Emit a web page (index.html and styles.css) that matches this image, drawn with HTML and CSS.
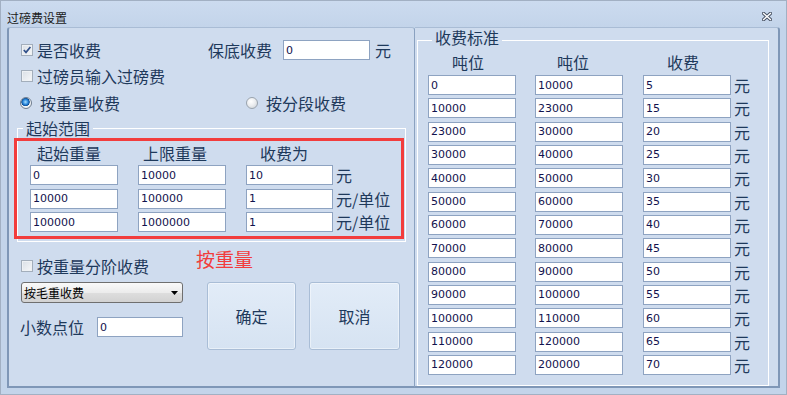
FILE: index.html
```html
<!DOCTYPE html>
<html lang="zh-CN">
<head>
<meta charset="utf-8">
<title>过磅费设置</title>
<link rel="stylesheet" href="styles.css">
</head>
<body>
<div class="window">
  <div class="titlebar">
    <span class="title">过磅费设置</span>
    <svg class="close" width="10" height="9" viewBox="0 0 10 9">
      <path d="M1.6 1.4 L8.4 7.6 M8.4 1.4 L1.6 7.6" stroke="#4b5567" stroke-width="3.4" stroke-linecap="square" fill="none"/>
      <path d="M1.6 1.4 L8.4 7.6 M8.4 1.4 L1.6 7.6" stroke="#ffffff" stroke-width="1.4" stroke-linecap="square" fill="none"/>
    </svg>
  </div>
  <div class="client">
    <div class="panel left">
      <div class="row r1">
        <div class="chk w-first"><span class="box"><svg width="10" height="10" viewBox="0 0 10 10"><path d="M1.8 5 L4 7.4 L8.4 2" stroke="#30508a" stroke-width="1.7" fill="none"/></svg></span><span>是否收费</span></div>
        <span class="lbl">保底收费</span>
        <input class="tb tb-min" value="0" readonly>
        <span class="unit u-min">元</span>
      </div>
      <div class="row r2">
        <div class="chk"><span class="box"></span><span>过磅员输入过磅费</span></div>
      </div>
      <div class="row r3">
        <div class="rad w-rad"><span class="radio on"></span><span>按重量收费</span></div>
        <div class="rad"><span class="radio"></span><span>按分段收费</span></div>
      </div>
      <fieldset class="grp range">
        <legend>起始范围</legend>
        <div class="redbox">
          <div class="rb-head">
            <span class="h1">起始重量</span>
            <span class="h2">上限重量</span>
            <span class="h3">收费为</span>
          </div>
          <div class="rb-row first">
            <input class="tb c1" value="0" readonly>
            <input class="tb c2" value="10000" readonly>
            <input class="tb c3" value="10" readonly>
            <span class="unit">元</span>
          </div>
          <div class="rb-row">
            <input class="tb c1" value="10000" readonly>
            <input class="tb c2" value="100000" readonly>
            <input class="tb c3" value="1" readonly>
            <span class="unit">元/单位</span>
          </div>
          <div class="rb-row">
            <input class="tb c1" value="100000" readonly>
            <input class="tb c2" value="1000000" readonly>
            <input class="tb c3" value="1" readonly>
            <span class="unit">元/单位</span>
          </div>
        </div>
      </fieldset>
      <div class="bottom">
        <div class="bcol">
          <div class="row">
            <div class="chk"><span class="box"></span><span>按重量分阶收费</span></div>
          </div>
          <div class="select">
            <span>按毛重收费</span>
            <svg width="7" height="4" viewBox="0 0 7 4"><path d="M0 0 H7 L3.5 4 Z" fill="#000"/></svg>
          </div>
          <div class="row dec">
            <span class="lbl">小数点位</span>
            <input class="tb tb-dec" value="0" readonly>
          </div>
        </div>
        <div class="acol">
          <div class="redlabel">按重量</div>
          <div class="btns">
            <button class="btn ok">确定</button>
            <button class="btn cancel">取消</button>
          </div>
        </div>
      </div>
    </div>
    <div class="panel right">
      <fieldset class="grp std">
        <legend>收费标准</legend>
        <div class="std-head">
          <span class="s1">吨位</span>
          <span class="s2">吨位</span>
          <span class="s3">收费</span>
        </div>
        <div class="std-rows">
          <div class="srow"><input class="tb" value="0" readonly><input class="tb" value="10000" readonly><input class="tb" value="5" readonly><span class="unit">元</span></div>
          <div class="srow"><input class="tb" value="10000" readonly><input class="tb" value="23000" readonly><input class="tb" value="15" readonly><span class="unit">元</span></div>
          <div class="srow"><input class="tb" value="23000" readonly><input class="tb" value="30000" readonly><input class="tb" value="20" readonly><span class="unit">元</span></div>
          <div class="srow"><input class="tb" value="30000" readonly><input class="tb" value="40000" readonly><input class="tb" value="25" readonly><span class="unit">元</span></div>
          <div class="srow"><input class="tb" value="40000" readonly><input class="tb" value="50000" readonly><input class="tb" value="30" readonly><span class="unit">元</span></div>
          <div class="srow"><input class="tb" value="50000" readonly><input class="tb" value="60000" readonly><input class="tb" value="35" readonly><span class="unit">元</span></div>
          <div class="srow"><input class="tb" value="60000" readonly><input class="tb" value="70000" readonly><input class="tb" value="40" readonly><span class="unit">元</span></div>
          <div class="srow"><input class="tb" value="70000" readonly><input class="tb" value="80000" readonly><input class="tb" value="45" readonly><span class="unit">元</span></div>
          <div class="srow"><input class="tb" value="80000" readonly><input class="tb" value="90000" readonly><input class="tb" value="50" readonly><span class="unit">元</span></div>
          <div class="srow"><input class="tb" value="90000" readonly><input class="tb" value="100000" readonly><input class="tb" value="55" readonly><span class="unit">元</span></div>
          <div class="srow"><input class="tb" value="100000" readonly><input class="tb" value="110000" readonly><input class="tb" value="60" readonly><span class="unit">元</span></div>
          <div class="srow"><input class="tb" value="110000" readonly><input class="tb" value="120000" readonly><input class="tb" value="65" readonly><span class="unit">元</span></div>
          <div class="srow"><input class="tb" value="120000" readonly><input class="tb" value="200000" readonly><input class="tb" value="70" readonly><span class="unit">元</span></div>
        </div>
      </fieldset>
    </div>
  </div>
</div>
</body>
</html>
```

FILE: styles.css
```css
* { box-sizing: border-box; }
html, body { margin: 0; padding: 0; }
body {
  width: 787px;
  height: 395px;
  overflow: hidden;
  font-family: "Noto Sans CJK SC", "Noto Sans", sans-serif;
  color: #1e395b;
  background: #c4d5ea;
}
.window {
  width: 787px;
  height: 395px;
  border: 1px solid #a2b0c3;
  background: linear-gradient(#ccdbef, #c3d4ea 26px, #c3d4ea);
  display: flex;
  flex-direction: column;
}
.titlebar {
  flex: none;
  height: 26px;
  display: flex;
  justify-content: space-between;
  align-items: flex-start;
  padding: 9px 14px 0 6px;
}
.title { font-size: 12px; line-height: 16px; color: #1b1b1b; }
.close { margin-top: 2px; }
.client {
  flex: 1;
  display: flex;
  margin: 0 6px 6px 6px;
  min-height: 0;
}
.panel { background: #cfdcee; }
.left {
  width: 408px;
  flex: none;
  border-left: 2px solid #7f97b7;
  border-top: 1px solid #a9bcd5;
  border-right: 1px solid #8aa1c0;
  border-bottom: 2px solid #7f97b7;
  border-radius: 3px 3px 0 0;
  padding: 12px 8px 0 12px;
}
.right {
  flex: 1;
  display: flex;
  flex-direction: column;
  border-top: 1px solid #a9bcd5;
  border-right: 2px solid #7f97b7;
  border-bottom: 2px solid #7f97b7;
  border-radius: 0 3px 0 0;
  padding: 1px 9px 0 2px;
}
.row { display: flex; align-items: center; height: 20px; }
.r2 { margin-top: 6px; }
.r3 { margin-top: 7px; }
.chk, .rad { display: flex; align-items: center; font-size: 16px; line-height: 20px; white-space: nowrap; }
.w-first { width: 187px; }
.box {
  width: 12px;
  height: 12px;
  margin-right: 4px;
  border: 1px solid #a3aebb;
  background: linear-gradient(135deg, #d9dfe6, #f7f8f9);
  box-shadow: inset 0 0 0 1px #eef1f4;
  display: flex;
  align-items: center;
  justify-content: center;
}
.box svg { display: block; }
.rad { margin-left: -1px; }
.w-rad { width: 227px; }
.radio {
  width: 12px;
  height: 12px;
  border-radius: 50%;
  margin-right: 8px;
  border: 1px solid #9aa3ad;
  background: radial-gradient(circle at 40% 35%, #ffffff 0%, #eceef0 45%, #c9ced4 100%);
}
.radio.on {
  border-color: #6f7d8e;
  background: radial-gradient(circle at 45% 40%, #a9e2ff 0%, #2f8be0 30%, #0d4f95 48%, #f4f6f8 55%, #dfe3e7 100%);
}
.lbl { font-size: 16px; line-height: 20px; white-space: nowrap; }
.unit { font-size: 16px; line-height: 20px; white-space: nowrap; }
.tb {
  display: block;
  height: 20px;
  width: 88px;
  margin: 0;
  padding: 0 2px;
  border: 1px solid #8ea3c1;
  background: #ffffff;
  font-family: "DejaVu Sans", sans-serif;
  font-size: 11px;
  color: #12124e;
  outline: none;
}
.tb-min { width: 87px; margin-left: 11px; }
.u-min { margin-left: 5px; }

.grp {
  margin: 0;
  border: 1px solid #ffffff;
  min-width: 0;
}
.grp legend { font-size: 16px; padding: 0 3px; }
.range {
  margin: 5px 0 0 -4px;
  width: 389px;
  padding: 0 0 2px 0;
}
.range legend { line-height: 20px; margin-left: 5px; }
.redbox {
  margin-left: -4px;
  width: 390px;
  border: 3px solid #f23d3d;
  padding: 2px 0 4px 13px;
}
.rb-head { display: flex; font-size: 16px; line-height: 20px; height: 20px; white-space: nowrap; }
.rb-head span { display: block; }
.h1 { width: 108px; padding-left: 7px; }
.h2 { width: 108px; padding-left: 5px; }
.h3 { padding-left: 14px; }
.rb-row { display: flex; align-items: center; margin-top: 3.5px; }
.rb-row.first { margin-top: 2px; }
.rb-row .c2 { margin-left: 20px; }
.rb-row .c3 { margin-left: 20px; width: 87px; }
.rb-row .unit { margin-left: 3px; }

.bottom { display: flex; margin-top: 6px; }
.bcol { width: 162px; padding-top: 8px; flex: none; }
.select {
  margin-top: 6px;
  height: 21px;
  width: 162px;
  border: 1px solid #6f6f6f;
  border-radius: 3px;
  background: linear-gradient(#fafafa, #ececec 50%, #dedede 51%, #d2d2d2);
  display: flex;
  align-items: center;
  justify-content: space-between;
  padding: 0 4px 0 2px;
  font-size: 12px;
  color: #000;
}
.select svg { display: block; }
.dec { margin-top: 14px; margin-left: -1px; }
.tb-dec { width: 86px; margin-left: 13px; }
.acol { margin-left: 13px; }
.redlabel { font-size: 19px; line-height: 22px; color: #f23d3d; white-space: nowrap; }
.btns { display: flex; margin-top: 12px; margin-left: 11px; }
.btn {
  height: 68px;
  width: 89px;
  margin: 0;
  border: 1px solid #a9bdd6;
  border-radius: 3px;
  background: linear-gradient(#e2ecf8, #d6e3f2);
  box-shadow: inset 0 0 0 1px rgba(255, 255, 255, 0.45);
  font-family: "Noto Sans CJK SC", sans-serif;
  font-size: 16px;
  color: #1e395b;
  padding: 0;
}
.cancel { width: 91px; margin-left: 13px; }

.std {
  flex: 1;
  margin: 0;
  padding: 0 0 0 10px;
}
.std legend { line-height: 16px; padding: 0 3px 6px; margin-left: 4px; }
.std-head { display: flex; margin-top: 1px; height: 20px; font-size: 16px; line-height: 20px; white-space: nowrap; }
.std-head span { display: block; width: 88px; }
.s1 { padding-left: 24px; }
.s2 { margin-left: 19px; padding-left: 22px; }
.s3 { margin-left: 20px; padding-left: 24px; }
.std-rows { margin-top: 3px; display: flex; flex-direction: column; gap: 3.33px; }
.srow { display: flex; align-items: center; }
.srow .tb:nth-child(2) { margin-left: 19px; }
.srow .tb:nth-child(3) { margin-left: 20px; }
.srow .unit { margin-left: 3px; }
```
